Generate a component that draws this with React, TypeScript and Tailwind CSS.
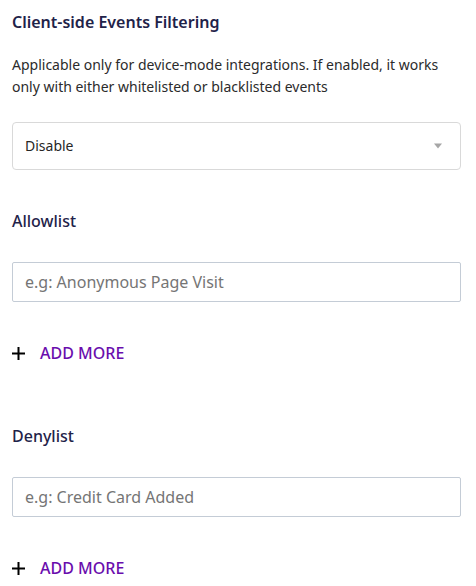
export default function App() {
  const font = { fontFamily: '"Noto Sans", "Open Sans", sans-serif' };
  return (
    <div className="min-h-screen bg-white pl-3 pt-[10px]" style={font}>
      <div className="w-[449px]">
        <h3 className="text-base leading-6 font-semibold text-[#1f2349]">Client-side Events Filtering</h3>
        <p className="mt-5 text-sm leading-[22px] text-[#2b2b2b]">
          Applicable only for device-mode integrations. If enabled, it works only with either whitelisted or blacklisted events
        </p>

        <div className="mt-6 h-12 rounded border border-[#d9d9d9] flex items-center justify-between pl-3 pr-4">
          <span className="text-sm text-[#262626]">Disable</span>
          <svg width="10" height="6" viewBox="0 0 10 6" className="mr-[1px]">
            <path d="M1 0.5 L9 0.5 L5 5.5 Z" fill="#a6a6a6" />
          </svg>
        </div>

        <Section title="Allowlist" placeholder="e.g: Anonymous Page Visit" topGap="mt-[39px]" />
        <Section title="Denylist" placeholder="e.g: Credit Card Added" topGap="mt-[59px]" />
      </div>
    </div>
  );
}

function Section({ title, placeholder, topGap }: { title: string; placeholder: string; topGap: string }) {
  return (
    <div>
      <div className={`${topGap} text-base leading-6 font-medium text-[#1f2349]`}>{title}</div>
      <input
        className="mt-[29px] block w-full h-10 border border-[#c4ccd6] rounded-[2px] px-3 text-base text-[#333] placeholder:text-[#757575] outline-none"
        placeholder={placeholder}
      />
      <button className="mt-[39px] flex items-center h-6 gap-[15px]">
        <svg width="13" height="13" viewBox="0 0 13 13">
          <path d="M6.5 0 V13 M0 6.5 H13" stroke="#000" strokeWidth="2" />
        </svg>
        <span className="text-base font-medium text-[#6a0dad] leading-6">ADD MORE</span>
      </button>
    </div>
  );
}
